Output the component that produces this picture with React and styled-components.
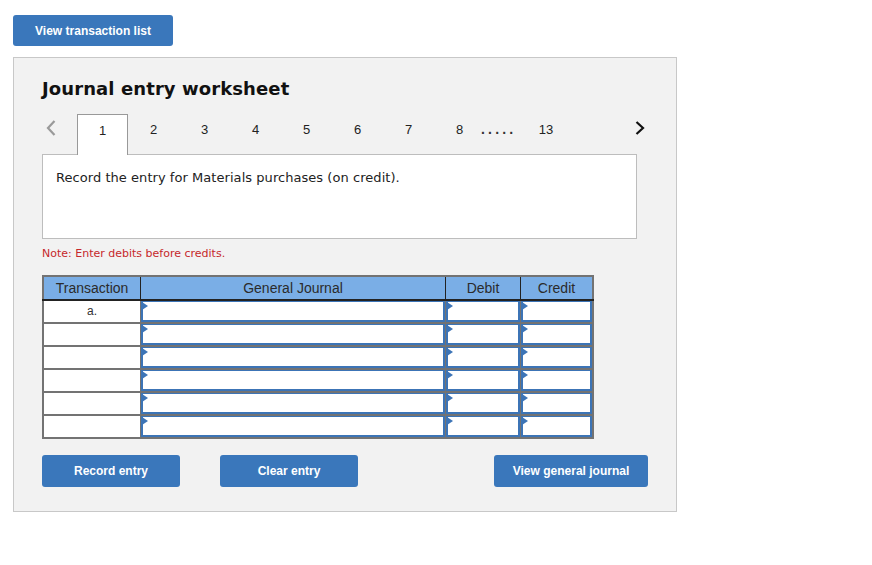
import React from "react";
import styled, { createGlobalStyle } from "styled-components";

const Global = createGlobalStyle`
  html, body { margin: 0; padding: 0; background: #fff; }
  body { font-family: "Liberation Sans", Arial, sans-serif; }
`;

const Page = styled.div`
  padding: 15px 0 0 13px;
  width: 664px;
`;

const BlueButton = styled.button`
  background: #3a77bb;
  color: #fff;
  border: none;
  border-radius: 3px;
  font-family: "Liberation Sans", Arial, sans-serif;
  font-weight: bold;
  font-size: 12px;
  height: ${(p) => p.$h || 32}px;
  width: ${(p) => p.$w}px;
  padding: 0;
  cursor: pointer;
`;

const Panel = styled.div`
  margin-top: 11px;
  border: 1px solid #c8c8c8;
  background: #f2f2f2;
  height: 453px;
  box-sizing: content-box;
  padding: 0 0 0 28px;
`;

const Title = styled.h2`
  margin: 0;
  padding-top: 20px;
  font-family: "DejaVu Sans", Verdana, sans-serif;
  font-weight: bold;
  font-size: 18px;
  line-height: 22px;
  color: #111;
  letter-spacing: 0.1px;
`;

const TabBar = styled.div`
  display: flex;
  align-items: flex-end;
  margin-top: 13px;
  height: 41px;
  width: 604px;
  position: relative;
`;

const Arrow = styled.div`
  width: 35px;
  height: 41px;
  display: flex;
  align-items: center;
  justify-content: ${(p) => (p.$right ? "flex-end" : "flex-start")};
  padding: 0 0 12px ${(p) => (p.$right ? 0 : 3)}px;
  box-sizing: border-box;
  margin-left: ${(p) => (p.$right ? "auto" : 0)};
`;

const Tab = styled.div`
  width: 51px;
  height: ${(p) => (p.$active ? 41 : 40)}px;
  box-sizing: border-box;
  display: flex;
  align-items: center;
  justify-content: center;
  padding-bottom: 10px;
  font-family: "Liberation Sans", Arial, sans-serif;
  font-size: 13px;
  color: #222;
  background: ${(p) => (p.$active ? "#fff" : "transparent")};
  border: ${(p) => (p.$active ? "1px solid #999" : "1px solid transparent")};
  border-bottom: none;
  position: relative;
  z-index: 2;
  margin-bottom: ${(p) => (p.$active ? -1 : 0)}px;
`;

const Dots = styled.div`
  height: 40px;
  display: flex;
  align-items: center;
  padding-bottom: 10px;
  box-sizing: border-box;
  font-size: 14px;
  font-weight: bold;
  letter-spacing: 3.2px;
  color: #333;
  margin: 0 4px 0 -4px;
`;

const Prompt = styled.div`
  width: 595px;
  height: 85px;
  box-sizing: border-box;
  background: #fff;
  border: 1px solid #bdbdbd;
  padding: 15px 13px;
  font-family: "DejaVu Sans", Verdana, sans-serif;
  font-size: 13px;
  letter-spacing: 0.05px;
  color: #222;
  position: relative;
  z-index: 1;
`;

const Note = styled.div`
  margin-top: 8px;
  font-family: "DejaVu Sans", Verdana, sans-serif;
  font-size: 11px;
  color: #c6282b;
  line-height: 14px;
`;

const Table = styled.table`
  margin-top: 14px;
  border-collapse: collapse;
  border: 2px solid #737373;
  table-layout: fixed;
`;

const Th = styled.th`
  background: #7aaee6;
  color: #2b2b2b;
  font-family: "Liberation Sans", Arial, sans-serif;
  font-size: 14px;
  font-weight: normal;
  height: 22px;
  padding: 0;
  border-right: 1px solid #222;
  border-bottom: 2px solid #222;
  width: ${(p) => p.$w}px;
  &:last-child { border-right: none; }
`;

const Td = styled.td`
  background: #fff;
  height: 21px;
  padding: 0;
  border: 2px solid #737373;
  border-top-width: ${(p) => (p.$first ? 0 : 2)}px;
  border-right-width: 1px;
  text-align: center;
  font-family: "Liberation Sans", Arial, sans-serif;
  font-size: 12px;
  color: #333;
  vertical-align: top;
  line-height: 20px;
`;

const InputTd = styled.td`
  padding: 0;
  height: 21px;
  border: 1px solid #737373;
  border-top-width: ${(p) => (p.$first ? 0 : 2)}px;
  background: #fff;
  position: relative;
`;

const Field = styled.div`
  height: 21px;
  box-sizing: border-box;
  border: 2px solid #3c74b6;
  border-top-width: 1px;
  position: relative;
  &::before {
    content: "";
    position: absolute;
    left: -1px;
    top: 0;
    width: 0;
    height: 0;
    border-top: 4px solid transparent;
    border-bottom: 4px solid transparent;
    border-left: 6px solid #3c74b6;
  }
`;

const Actions = styled.div`
  display: flex;
  margin-top: 16px;
  width: 606px;
  gap: 40px;
`;

const Spacer = styled.div`
  flex: 1;
`;

const ChevronLeft = () => (
  <svg width="12" height="18" viewBox="0 0 12 18">
    <path d="M9.5 2 L3 9 L9.5 16" stroke="#9a9a9a" strokeWidth="2.2" fill="none" />
  </svg>
);

const ChevronRight = () => (
  <svg width="12" height="18" viewBox="0 0 12 18">
    <path d="M2.5 3 L9 9 L2.5 15" stroke="#111" strokeWidth="2.2" fill="none" />
  </svg>
);

const tabs = ["1", "2", "3", "4", "5", "6", "7", "8"];
const rows = ["a.", "", "", "", "", ""];

export default function App() {
  return (
    <Page>
      <Global />
      <BlueButton $w={160} $h={31}>View transaction list</BlueButton>
      <Panel>
        <Title>Journal entry worksheet</Title>
        <TabBar>
          <Arrow><ChevronLeft /></Arrow>
          {tabs.map((t, i) => (
            <Tab key={t} $active={i === 0}>{t}</Tab>
          ))}
          <Dots>.....</Dots>
          <Tab>13</Tab>
          <Arrow $right><ChevronRight /></Arrow>
        </TabBar>
        <Prompt>Record the entry for Materials purchases (on credit).</Prompt>
        <Note>Note: Enter debits before credits.</Note>
        <Table>
          <thead>
            <tr>
              <Th $w={96}>Transaction</Th>
              <Th $w={304}>General Journal</Th>
              <Th $w={74}>Debit</Th>
              <Th $w={71}>Credit</Th>
            </tr>
          </thead>
          <tbody>
            {rows.map((r, i) => (
              <tr key={i}>
                <Td $first={i === 0}>{r}</Td>
                <InputTd $first={i === 0}><Field /></InputTd>
                <InputTd $first={i === 0}><Field /></InputTd>
                <InputTd $first={i === 0}><Field /></InputTd>
              </tr>
            ))}
          </tbody>
        </Table>
        <Actions>
          <BlueButton $w={138}>Record entry</BlueButton>
          <BlueButton $w={138}>Clear entry</BlueButton>
          <Spacer />
          <BlueButton $w={154}>View general journal</BlueButton>
        </Actions>
      </Panel>
    </Page>
  );
}
